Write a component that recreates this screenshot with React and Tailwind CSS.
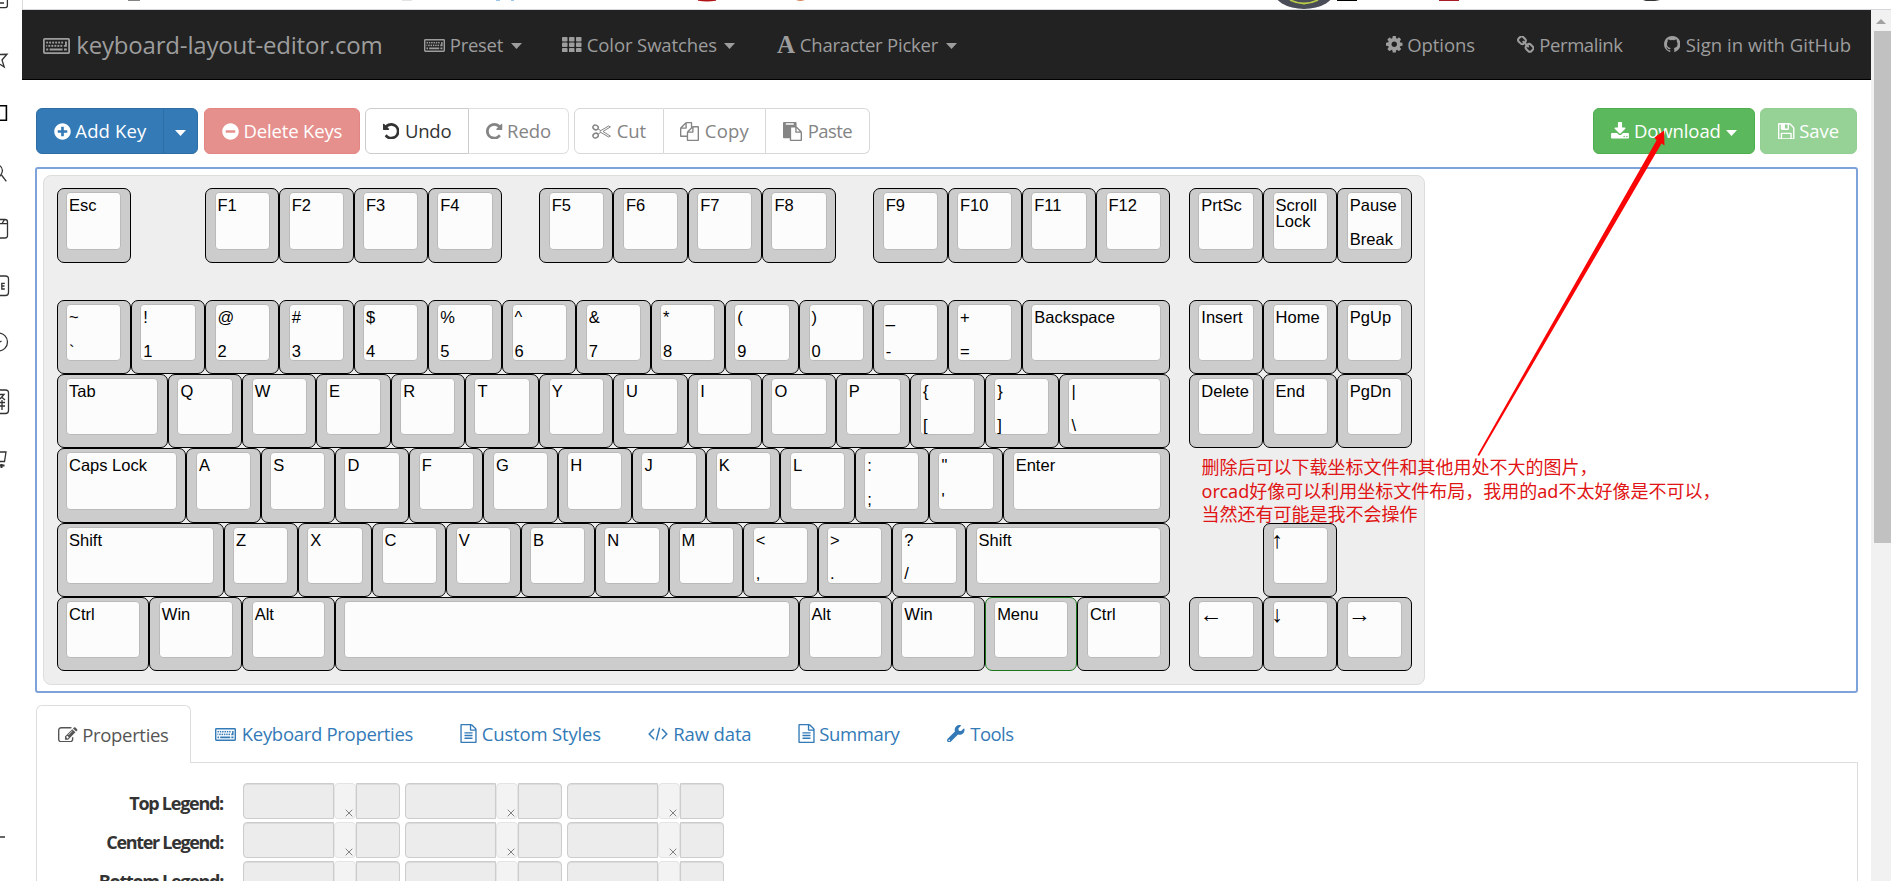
import React, { useLayoutEffect, useRef, useState } from "react";
import { FaPlusCircle, FaMinusCircle, FaWrench } from "react-icons/fa";

const P = {
  github:
    "M896 128q209 0 385.5 103t279.5 279.5 103 385.5q0 251-146.5 451.5t-378.5 277.5q-27 5-40-7t-13-30q0-3 .5-76.5t.5-134.5q0-97-52-142 57-6 102.5-18t94-39 81-66.5 53-105 20.5-150.5q0-119-79-206 37-91-8-204-28-9-81 11t-92 44l-38 24q-93-26-192-26t-192 26q-16-11-42.5-27t-83.5-38.5-85-13.5q-45 113-8 204-79 87-79 206 0 85 20.5 150t52.5 105 80.5 67 94 39 102.5 18q-39 36-49 103-21 10-45 15t-57 5-65.5-21.5-55.5-62.5q-19-32-48.5-52t-49.5-24l-20-3q-21 0-29 4.5t-5 11.5 9 14 13 12l7 5q22 10 43.5 38t31.5 51l10 23q13 38 44 61.5t67 30 69.5 7 55.5-3.5l23-4q0 38 .5 88.5t.5 54.5q0 18-13 30t-40 7q-232-77-378.5-277.5t-146.5-451.5q0-209 103-385.5t279.5-279.5 385.5-103z",
  cog: "M1152 896q0-106-75-181t-181-75-181 75-75 181 75 181 181 75 181-75 75-181zm512-109v222q0 12-8 23t-20 13l-185 28q-19 54-39 91 35 50 107 138 10 12 10 25t-9 23q-27 37-99 108t-94 71q-12 0-26-9l-138-108q-44 23-91 38-16 136-29 186-7 28-36 28h-222q-14 0-24.5-8.5t-11.5-21.5l-28-184q-49-16-90-37l-141 107q-10 9-25 9-14 0-25-11-126-114-165-168-7-10-7-23 0-12 8-23 15-21 51-66.5t54-70.5q-27-50-41-99l-183-27q-13-2-21-12.5t-8-23.5v-222q0-12 8-23t19-13l186-28q14-46 39-92-40-57-107-138-10-12-10-24 0-10 9-23 26-36 98.5-107.5t94.5-71.5q13 0 26 10l138 107q44-23 91-38 16-136 29-186 7-28 36-28h222q14 0 24.5 8.5t11.5 21.5l28 184q49 16 90 37l142-107q9-9 24-9 13 0 25 10 129 119 165 170 7 8 7 22 0 12-8 23-15 21-51 66.5t-54 70.5q26 50 41 98l183 28q13 2 21 12.5t8 23.5z",
  link: "M1520 1216q0-40-28-68l-208-208q-28-28-68-28-42 0-72 32 3 3 19 18.5t21.5 21.5 15 19 13 25.5 3.5 27.5q0 40-28 68t-68 28q-15 0-27.5-3.5t-25.5-13-19-15-21.5-21.5-18.5-19q-33 31-33 73 0 40 28 68l206 207q27 27 68 27 40 0 68-26l147-146q28-28 28-67zm-703-705q0-40-28-68l-206-207q-28-28-68-28-39 0-68 27l-147 146q-28 28-28 67 0 40 28 68l208 208q27 27 68 27 42 0 72-31-3-3-19-18.5t-21.5-21.5-15-19-13-25.5-3.5-27.5q0-40 28-68t68-28q15 0 27.5 3.5t25.5 13 19 15 21.5 21.5 18.5 19q33-31 33-73zm895 705q0 120-85 203l-147 146q-83 83-203 83-121 0-204-85l-206-207q-83-83-83-203 0-123 88-209l-88-88q-86 88-208 88-120 0-204-84l-208-208q-84-84-84-204t85-203l147-146q83-83 203-83 121 0 204 85l206 207q83 83 83 203 0 123-88 209l88 88q86-88 208-88 120 0 204 84l208 208q84 84 84 204z",
  undo: "M1664 896q0 156-61 298t-164 245-245 164-298 61q-172 0-327-72.5t-264-204.5q-7-10-6.5-22.5t8.5-20.5l137-138q10-9 25-9 16 2 23 12 73 95 179 147t225 52q104 0 198.5-40.5t163.5-109.5 109.5-163.5 40.5-198.5-40.5-198.5-109.5-163.5-163.5-109.5-198.5-40.5q-98 0-188 35.5t-160 101.5l137 138q31 30 14 69-17 40-59 40h-448q-26 0-45-19t-19-45v-448q0-42 40-59 39-17 69 14l130 129q107-101 244.5-156.5t284.5-55.5q156 0 298 61t245 164 164 245 61 298z",
  download:
    "M1344 1344q0-26-19-45t-45-19-45 19-19 45 19 45 45 19 45-19 19-45zm256 0q0-26-19-45t-45-19-45 19-19 45 19 45 45 19 45-19 19-45zm128-224v320q0 40-28 68t-68 28h-1472q-40 0-68-28t-28-68v-320q0-40 28-68t68-28h465l135 136q58 56 136 56t136-56l136-136h464q40 0 68 28t28 68zm-325-569q17 41-14 70l-448 448q-18 19-45 19t-45-19l-448-448q-31-29-14-70 17-39 59-39h256v-448q0-26 19-45t45-19h256q26 0 45 19t19 45v448h256q42 0 59 39z",
  floppy:
    "M512 1536h768v-384h-768v384zm896 0h128v-896q0-14-10-38.5t-20-34.5l-281-281q-10-10-34-20t-39-10v416q0 40-28 68t-68 28h-576q-40 0-68-28t-28-68v-416h-128v1280h128v-416q0-40 28-68t68-28h832q40 0 68 28t28 68v416zm-384-928v-320q0-13-9.5-22.5t-22.5-9.5h-192q-13 0-22.5 9.5t-9.5 22.5v320q0 13 9.5 22.5t22.5 9.5h192q13 0 22.5-9.5t9.5-22.5zm640 32v928q0 40-28 68t-68 28h-1344q-40 0-68-28t-28-68v-1344q0-40 28-68t68-28h928q40 0 88 20t76 48l280 280q28 28 48 76t20 88z",
  files:
    "M1696 384q40 0 68 28t28 68v1216q0 40-28 68t-68 28h-960q-40 0-68-28t-28-68v-288h-544q-40 0-68-28t-28-68v-672q0-40 20-88t48-76l408-408q28-28 76-48t88-20h416q40 0 68 28t28 68v328q68-40 128-40h416zm-544 213l-299 299h299v-299zm-640-384l-299 299h299v-299zm196 647l316-316v-416h-384v416q0 40-28 68t-68 28h-416v640h512v-256q0-40 20-88t48-76zm956 804v-1152h-384v416q0 40-28 68t-68 28h-416v640h896z",
  paste:
    "M768 1664h896v-640h-416q-40 0-68-28t-28-68v-416h-384v1152zm256-1440v-64q0-13-9.5-22.5t-22.5-9.5h-704q-13 0-22.5 9.5t-9.5 22.5v64q0 13 9.5 22.5t22.5 9.5h704q13 0 22.5-9.5t9.5-22.5zm256 672h299l-299-299v299zm512 128v672q0 40-28 68t-68 28h-960q-40 0-68-28t-28-68v-160h-544q-40 0-68-28t-28-68v-1344q0-40 28-68t68-28h1088q40 0 68 28t28 68v328q21 13 36 28l408 408q28 28 48 76t20 88z",
  fileText:
    "M1596 380q28 28 48 76t20 88v1152q0 40-28 68t-68 28h-1344q-40 0-68-28t-28-68v-1600q0-40 28-68t68-28h896q40 0 88 20t76 48zm-444-244v376h376q-10-29-22-41l-313-313q-12-12-41-22zm384 1528v-1024h-416q-40 0-68-28t-28-68v-416h-768v1536h1280zm-1024-864q0-14 9-23t23-9h704q14 0 23 9t9 23v64q0 14-9 23t-23 9h-704q-14 0-23-9t-9-23v-64zm736 224q14 0 23 9t9 23v64q0 14-9 23t-23 9h-704q-14 0-23-9t-9-23v-64q0-14 9-23t23-9h704zm0 256q14 0 23 9t9 23v64q0 14-9 23t-23 9h-704q-14 0-23-9t-9-23v-64q0-14 9-23t23-9h704z",
  edit: "M888 1184l116-116-152-152-116 116v56h96v96h56zm440-720q-16-16-33 1l-350 350q-17 17-1 33t33-1l350-350q17-17 1-33zm80 594v190q0 119-84.5 203.5t-203.5 84.5h-832q-119 0-203.5-84.5t-84.5-203.5v-832q0-119 84.5-203.5t203.5-84.5h832q63 0 117 25 15 7 18 23 3 17-9 29l-49 49q-14 14-32 8-23-6-45-6h-832q-66 0-113 47t-47 113v832q0 66 47 113t113 47h832q66 0 113-47t47-113v-126q0-13 9-22l64-64q15-15 35-7t20 29zm-96-738l288 288-672 672h-288v-288zm444 132l-92 92-288-288 92-92q28-28 68-28t68 28l152 152q28 28 28 68t-28 68z",
};

function Glyph({ d, box = "128 128 1536 1536", className }) {
  return (
    <svg viewBox={box} className={`shrink-0 fill-current ${className}`}>
      <path d={d} />
    </svg>
  );
}

/* One line of text, tracked so that it fills exactly w pixels. */
function Fit({ w, children, className = "" }) {
  const ref = useRef(null);
  const [ls, setLs] = useState(0);
  useLayoutEffect(() => {
    const el = ref.current;
    el.style.letterSpacing = "0px";
    const natural = el.getBoundingClientRect().width;
    const v = (w - natural) / children.length;
    el.style.letterSpacing = `${v}px`;
    setLs(v);
  }, [w, children]);
  return (
    <span ref={ref} style={{ letterSpacing: `${ls}px` }} className={`inline-block shrink-0 whitespace-pre pl-[0.8px] ${className}`}>
      {children}
    </span>
  );
}

function Caret({ className = "" }) {
  return (
    <svg viewBox="0 0 10 5" preserveAspectRatio="none" className={`h-1.5 w-[11px] shrink-0 fill-current ${className}`}>
      <path d="M0 0H10L5 5Z" />
    </svg>
  );
}

function KeyboardIcon({ className }) {
  const dots = [];
  for (let i = 0; i < 6; i++) dots.push([3.2 + i * 3, 3.6]);
  for (let i = 0; i < 5; i++) dots.push([5.4 + i * 3, 6.9]);
  return (
    <svg viewBox="0 0 27 16" preserveAspectRatio="none" className={`shrink-0 ${className}`}>
      <rect x="0.9" y="0.9" width="25.2" height="14.2" rx="0.8" fill="none" stroke="currentColor" strokeWidth="1.8" />
      {dots.map(([x, y]) => (
        <rect key={`${x}-${y}`} x={x} y={y} width="1.9" height="1.9" fill="currentColor" />
      ))}
      <path d="M3.2 6.900h1v1.900h-1zM3.200 10.600h2v2h-2zM6.600 10.600h13v2h-13zM21 10.600h2.800v2H21zM22 3.600h1.900v5.200h-3V6.900H22z" fill="currentColor" />
    </svg>
  );
}

function GridIcon() {
  return (
    <svg viewBox="0 0 19.5 15.5" className="h-[15.5px] w-[19.5px] shrink-0 fill-current">
      {[0, 1, 2].map((r) =>
        [0, 1, 2].map((c) => <rect key={`${r}${c}`} x={c * 7} y={r * 5.5} width="5.5" height="4.5" rx="0.8" />)
      )}
    </svg>
  );
}

function ScissorsIcon() {
  return (
    <svg viewBox="0 0 19 15" className="h-[15px] w-[19px] shrink-0" fill="none" stroke="currentColor">
      <ellipse cx="3.6" cy="3.4" rx="2.7" ry="2.3" transform="rotate(25 3.6 3.4)" strokeWidth="1.5" />
      <ellipse cx="3.6" cy="11.6" rx="2.7" ry="2.3" transform="rotate(-25 3.6 11.6)" strokeWidth="1.5" />
      <path d="M6 4.8L8.8 6.6L16.6 2L18.4 2.9L11 7.5L18.4 12.1L16.6 13L8.8 8.4L6 10.2M8.8 6.6L7.8 7.5L8.8 8.4" strokeWidth="1" />
    </svg>
  );
}

function CodeIcon() {
  return (
    <svg viewBox="0 0 20 14" className="h-3.5 w-5 shrink-0" fill="none" stroke="currentColor" strokeWidth="1.5">
      <path d="M6 2L1.2 7L6 12M14 2L18.8 7L14 12M11.6 0.6L8.4 13.4" />
    </svg>
  );
}

function Navbar() {
  return (
    <nav className="flex h-[70px] items-center border-b border-black bg-[#222] text-[18.5px] leading-[26px] text-[#9d9d9d]">
      <div className="flex w-[402px] items-center pl-[21px]">
        <KeyboardIcon className="mt-0.5 h-4 w-[27px]" />
        <Fit w={307} className="ml-[5.5px] pt-px text-[24px] leading-8">keyboard-layout-editor.com</Fit>
      </div>
      <div className="flex w-[138px] items-center">
        <KeyboardIcon className="mt-0.5 h-[13px] w-[21px]" />
        <Fit w={54} className="ml-1">Preset</Fit>
        <Caret className="ml-[8px] mt-0.5" />
      </div>
      <div className="flex w-[215px] items-center">
        <GridIcon />
        <Fit w={131} className="ml-[4.5px]">Color Swatches</Fit>
        <Caret className="ml-[7px] mt-0.5" />
      </div>
      <div className="flex items-center">
        <span className="font-[Liberation_Serif,serif] text-[25px] font-bold leading-6">A</span>
        <Fit w={139} className="ml-[4px]">Character Picker</Fit>
        <Caret className="ml-[7.5px] mt-0.5" />
      </div>
      <div className="ml-auto flex items-center pr-[20px]">
        <div className="flex w-[130.5px] items-center">
          <Glyph d={P.cog} className="size-[16.5px]" />
          <Fit w={68.5} className="ml-1">Options</Fit>
        </div>
        <div className="flex w-[147px] items-center">
          <Glyph d={P.link} box="80 80 1632 1632" className="size-[17.5px]" />
          <Fit w={84} className="ml-[4.5px]">Permalink</Fit>
        </div>
        <div className="flex items-center">
          <Glyph d={P.github} className="size-[16.5px]" />
          <Fit w={166} className="ml-[5px]">Sign in with GitHub</Fit>
        </div>
      </div>
    </nav>
  );
}

const BTN = "flex items-center justify-center border";

function Toolbar() {
  return (
    <div className="flex h-[46px] pl-3.5 pr-[14px] text-[18.5px] leading-[26px]">
      <div className="flex text-white">
        <div className={`${BTN} w-[128px] gap-1 rounded-l-md border-[#2e6da4] bg-[#337ab7]`}>
          <FaPlusCircle className="size-[17px] shrink-0" />
          <Fit w={72}>Add Key</Fit>
        </div>
        <div className={`${BTN} -ml-px w-[35px] rounded-r-md border-[#2e6da4] bg-[#337ab7] pt-1`}>
          <Caret />
        </div>
      </div>
      <div className={`${BTN} ml-[6px] w-[156px] gap-1 rounded-md border-[#e38583] bg-[#e6908d] text-white`}>
        <FaMinusCircle className="size-[17px] shrink-0" />
        <Fit w={99.5}>Delete Keys</Fit>
      </div>
      <div className="ml-[5px] flex text-[#848484]">
        <div className={`${BTN} w-[104px] gap-[5px] rounded-l-md border-[#ccc] text-[#333]`}>
          <Glyph d={P.undo} className="size-[16.5px]" />
          <Fit w={47}>Undo</Fit>
        </div>
        <div className={`${BTN} w-[100px] gap-1 rounded-r-md border-l-0 border-[#dedede]`}>
          <Glyph d={P.undo} className="size-[16.5px] -scale-x-100" />
          <Fit w={45}>Redo</Fit>
        </div>
      </div>
      <div className="ml-[5px] flex text-[#848484]">
        <div className={`${BTN} w-[90px] gap-[5px] rounded-l-md border-[#d8d8d8]`}>
          <ScissorsIcon />
          <Fit w={30}>Cut</Fit>
        </div>
        <div className={`${BTN} w-[102px] gap-[5px] border-l-0 border-[#d8d8d8]`}>
          <Glyph d={P.files} box="0 0 1792 1792" className="size-[19px]" />
          <Fit w={45}>Copy</Fit>
        </div>
        <div className={`${BTN} w-[104px] gap-[5px] rounded-r-md border-l-0 border-[#d8d8d8]`}>
          <Glyph d={P.paste} box="0 0 1792 1792" className="size-[19px]" />
          <Fit w={45}>Paste</Fit>
        </div>
      </div>
      <div className="ml-auto flex gap-[5px] text-white">
        <div className={`${BTN} w-[162px] rounded-md border-[#4cae4c] bg-[#5cb85c]`}>
          <Glyph d={P.download} box="64 0 1664 1536" className="mb-px h-[16.5px] w-[18px]" />
          <Fit w={87.5} className="ml-[4.5px]">Download</Fit>
          <Caret className="ml-[5.5px] mt-1" />
        </div>
        <div className={`${BTN} w-[97px] gap-1 rounded-md border-[#93ce93] bg-[#96d196]`}>
          <Glyph d={P.floppy} className="size-[16.5px]" />
          <Fit w={40.5}>Save</Fit>
        </div>
      </div>
    </div>
  );
}

const U = 74.25;
/* Each key: [width in units, top legend, bottom legend]; a number alone is a gap. */
const ROWS = [
  [[1, "Esc"], 1, [1, "F1"], [1, "F2"], [1, "F3"], [1, "F4"], 0.5, [1, "F5"], [1, "F6"], [1, "F7"], [1, "F8"], 0.5, [1, "F9"], [1, "F10"], [1, "F11"], [1, "F12"], 0.25, [1, "PrtSc"], [1, "Scroll Lock"], [1, "Pause", "Break"]],
  [[1, "~", "`"], [1, "!", "1"], [1, "@", "2"], [1, "#", "3"], [1, "$", "4"], [1, "%", "5"], [1, "^", "6"], [1, "&", "7"], [1, "*", "8"], [1, "(", "9"], [1, ")", "0"], [1, "_", "-"], [1, "+", "="], [2, "Backspace"], 0.25, [1, "Insert"], [1, "Home"], [1, "PgUp"]],
  [[1.5, "Tab"], [1, "Q"], [1, "W"], [1, "E"], [1, "R"], [1, "T"], [1, "Y"], [1, "U"], [1, "I"], [1, "O"], [1, "P"], [1, "{", "["], [1, "}", "]"], [1.5, "|", "\\"], 0.25, [1, "Delete"], [1, "End"], [1, "PgDn"]],
  [[1.75, "Caps Lock"], [1, "A"], [1, "S"], [1, "D"], [1, "F"], [1, "G"], [1, "H"], [1, "J"], [1, "K"], [1, "L"], [1, ":", ";"], [1, '"', "'"], [2.25, "Enter"]],
  [[2.25, "Shift"], [1, "Z"], [1, "X"], [1, "C"], [1, "V"], [1, "B"], [1, "N"], [1, "M"], [1, "<", ","], [1, ">", "."], [1, "?", "/"], [2.75, "Shift"], 1.25, [1, "↑"]],
  [[1.25, "Ctrl"], [1.25, "Win"], [1.25, "Alt"], [6.25, ""], [1.25, "Alt"], [1.25, "Win"], [1.25, "Menu"], [1.25, "Ctrl"], 0.25, [1, "←"], [1, "↓"], [1, "→"]],
];

function legendClass(text) {
  if (text === "↑" || text === "↓") return "-ml-1 block whitespace-nowrap text-[23px]";
  if (text === "←" || text === "→") return "-ml-0.5 block whitespace-nowrap text-[23px]";
  return text === "Scroll Lock" ? "block" : "block whitespace-nowrap";
}

function Key({ k: [w, top, bottom] }) {
  const tone = top === "Menu" ? "border-[#1c741c]" : "border-black";
  return (
    <div style={{ width: w * U }} className={`flex h-full shrink-0 rounded-[7px] border bg-[#ccc] px-[8.5px] pb-3 pt-[3px] ${tone}`}>
      <div className="flex min-w-0 flex-1 flex-col justify-between rounded-[4px] border border-[#bababa] bg-[#fcfcfc] pb-[1.5px] pl-0.5 pt-[4px]">
        <div className="w-[52px] overflow-visible">
          <span className={legendClass(top)}>{top}</span>
        </div>
        <div>{bottom}</div>
      </div>
    </div>
  );
}

function Keyboard() {
  return (
    <div className="h-[526px] rounded-[3px] border-2 border-[#7ea3db] pl-1.5 pt-1.5">
      <div className="h-[510px] w-[1382px] rounded-lg border border-[#ddd] bg-[#eee] pl-[12.5px] pt-[12.4px] font-[Liberation_Sans,Arial,sans-serif] text-[16.5px] leading-4 text-black">
        {ROWS.map((row, i) => (
          <div key={i} className={`flex h-[74.25px] ${i === 0 ? "mb-[37.125px]" : ""}`}>
            {row.map((k, j) =>
              typeof k === "number" ? <div key={j} style={{ width: k * U }} className="shrink-0" /> : <Key key={j} k={k} />
            )}
          </div>
        ))}
      </div>
    </div>
  );
}

function Tabs() {
  return (
    <div className="flex h-[58px] items-center border-b border-[#ddd] text-[18.5px] leading-[26px] text-[#337ab7]">
      <div className="-mb-px flex h-[58px] w-[155px] items-center rounded-t-md border border-b-0 border-[#ddd] bg-white pl-[21px] text-[#555]">
        <Glyph d={P.edit} box="0 128 1792 1408" className="h-[15.5px] w-[19.5px]" />
        <Fit w={87} className="ml-1">Properties</Fit>
      </div>
      <div className="flex w-[245px] items-center pl-[24px]">
        <KeyboardIcon className="mt-0.5 h-[13px] w-[21px]" />
        <Fit w={172} className="ml-[5px]">Keyboard Properties</Fit>
      </div>
      <div className="flex w-[187.5px] items-center pl-[24px]">
        <Glyph d={P.fileText} box="128 0 1536 1792" className="h-[19px] w-[17px]" />
        <Fit w={120} className="ml-1">Custom Styles</Fit>
      </div>
      <div className="flex w-[150px] items-center pl-[24px]">
        <CodeIcon />
        <Fit w={79} className="ml-[5px]">Raw data</Fit>
      </div>
      <div className="flex w-[149.5px] items-center pl-[24px]">
        <Glyph d={P.fileText} box="128 0 1536 1792" className="h-[19px] w-[17px]" />
        <Fit w={81} className="ml-1">Summary</Fit>
      </div>
      <div className="flex items-center pl-[24px]">
        <FaWrench className="size-[17.5px] shrink-0" />
        <Fit w={44} className="ml-[5px]">Tools</Fit>
      </div>
    </div>
  );
}

function LegendField() {
  return (
    <div className="flex h-[36px]">
      <div className="w-[91px] rounded-l-[4px] border border-[#ccc] bg-[#ececec] shadow-[inset_0_1px_1px_rgba(0,0,0,0.075)]" />
      <div className="flex w-[22px] items-end justify-end rounded-[4px] border border-[#e4e4e4] bg-[#f3f3f3] pb-px pr-0.5">
        <svg viewBox="0 0 8 8" className="size-2 stroke-[#808080]" fill="none">
          <path d="M0.7 0.7L7.3 7.3M7.3 0.7L0.7 7.3" />
        </svg>
      </div>
      <div className="w-[44px] rounded-r-[4px] border border-[#ccc] bg-[#ececec] shadow-[inset_0_1px_1px_rgba(0,0,0,0.075)]" />
    </div>
  );
}

function Properties() {
  const rows = [["Top Legend:", 94.5], ["Center Legend:", 117.5], ["Bottom Legend:", 125]];
  return (
    <div className="flex h-[118px] flex-col gap-[3px] overflow-hidden border-x border-[#ddd] pt-[20px]">
      {rows.map(([label, w]) => (
        <div key={label} className="flex h-[36px] shrink-0">
          <div className="w-[186px] pt-[6.5px] text-right text-[18px] font-bold leading-[26px] text-[#333]">
            <Fit w={w}>{label}</Fit>
          </div>
          <div className="ml-[20px] flex gap-[5px]">
            <LegendField />
            <LegendField />
            <LegendField />
          </div>
        </div>
      ))}
    </div>
  );
}

/* Right edges of the clipped browser side rail icons. */
function SideRail() {
  return (
    <svg viewBox="0 0 22 881" className="h-[881px] w-[22px] shrink-0" fill="none" stroke="#333" strokeWidth="1.3">
      <path d="M0 7.6H5.5Q7.4 7.6 7.4 5.5V0M0 3H4" />
      <path d="M0 54.5L7 54.3L2 60L4.2 67L0 64.2" />
      <path d="M0 105.7H6.4V120.3H0" stroke="#000" strokeWidth="1.6" />
      <path d="M-1 165Q3 167.500 2.300 171.500Q1.800 174.500 -1 177M1.500 175L6.300 181.300" />
      <path d="M0 219.500H5Q7.500 219.500 7.500 222V235.500Q7.500 238 5 238H0M0 223.700H7.500M2 223.500L4.500 219.700" />
      <path d="M0 276H5.500Q8.500 276 8.500 279V292.500Q8.500 295.500 5.500 295.500H0M4.800 283.300H1.800V289H4.800M1.800 286H4.500" />
      <circle cx="-1.500" cy="342" r="9" />
      <path d="M0 342L1.500 341" />
      <path d="M0 390H5.500Q8.500 390 8.500 393V410.500Q8.500 413.500 5.500 413.500H0M0 394.500H4L0 399M1.500 397L5 400M0 402.500H5M2 400V410M0 406H5" />
      <path d="M0 452H6L4.500 461.500H0" />
      <path d="M0 465.500H4.500M1.500 464V468" strokeWidth="2" />
      <path d="M0 837H5" strokeWidth="1.500" />
    </svg>
  );
}

/* Sliver of the browser chrome above the page. */
function TopSliver() {
  return (
    <svg viewBox="22 0 1869 10" className="block h-[10px] w-[1869px]">
      <path d="M22 9.500H1891" stroke="#d4d6da" />
      <path d="M22.500 0V10" stroke="#d9d9d9" />
      <path d="M128 0H140V0.900H128Z" fill="#777" />
      <path d="M402 0H412V0.800H402Z" fill="#ddd" />
      <path d="M496 0H500V0.900H496ZM511 0H514V0.900H511Z" fill="#9cc5ec" />
      <path d="M660 0H661" fill="none" />
      <path d="M698 0H716V0.800Q707 2 698 0.800Z" fill="#b01215" />
      <path d="M796 0H805Q800 1.500 796 0Z" fill="#c4581c" />
      <ellipse cx="1304" cy="-10" rx="31" ry="19" fill="#4a4c58" />
      <path d="M1290 0Q1304 7 1318 0" stroke="#b9cc45" strokeWidth="1.800" fill="none" />
      <path d="M1337 0H1357V1H1337Z" fill="#000" />
      <path d="M1439 0H1459V1H1439Z" fill="#a81c2a" />
      <path d="M1643 0H1660L1655 1H1646Z" fill="#333" />
    </svg>
  );
}

function Annotation() {
  return (
    <>
      <svg viewBox="1470 120 210 345" className="pointer-events-none absolute left-[1470px] top-[120px] h-[345px] w-[210px] fill-[#fa0505]">
        <path d="M1477.500 455L1656.500 140.500L1654.500 137.500L1664 130.500L1664.500 145.500L1661.500 143.500L1479 456Z" />
      </svg>
      <div className="absolute left-[1201.5px] top-[456px] whitespace-nowrap font-[Noto_Sans,Noto_Sans_CJK_SC,sans-serif] text-[18px] leading-[23.5px] text-[#e01414]">
        <p>删除后可以下载坐标文件和其他用处不大的图片，</p>
        <p>orcad好像可以利用坐标文件布局，我用的ad不太好像是不可以，</p>
        <p>当然还有可能是我不会操作</p>
      </div>
    </>
  );
}

export default function App() {
  return (
    <div className="relative flex h-[881px] w-[1891px] overflow-hidden bg-white font-[Open_Sans,sans-serif]">
      <SideRail />
      <div className="flex min-w-0 flex-1 flex-col">
        <TopSliver />
        <div className="flex flex-1">
          <main className="w-[1849px] shrink-0">
            <Navbar />
            <div className="pt-7">
              <Toolbar />
            </div>
            <div className="ml-[13px] mr-[13px] mt-[13px]">
              <Keyboard />
            </div>
            <div className="ml-3.5 mr-[13px] mt-3">
              <Tabs />
              <Properties />
            </div>
          </main>
          <div className="flex w-5 flex-col items-center bg-[#f1f1f1]">
            <svg viewBox="0 0 10 5" className="mb-[7px] mt-[9px] h-[5px] w-[10px] fill-[#a0a0a0]">
              <path d="M0 5H10L5 0Z" />
            </svg>
            <div className="ml-0.5 h-[512px] w-[17px] bg-[#c1c1c1]" />
          </div>
        </div>
      </div>
      <Annotation />
    </div>
  );
}
